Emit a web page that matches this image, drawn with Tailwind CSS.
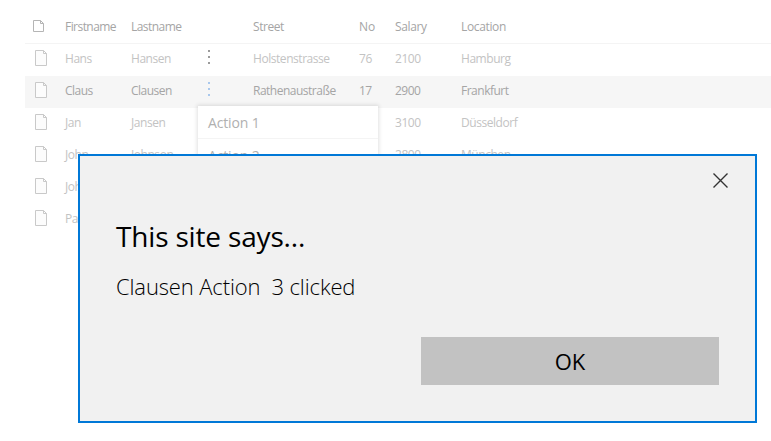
<!DOCTYPE html>
<html lang="en">
<head>
<meta charset="utf-8">
<title>Employees</title>
<script src="https://cdn.jsdelivr.net/npm/@tailwindcss/browser@4"></script>
</head>
<body class="relative h-[441px] w-[771px] overflow-hidden bg-white font-['Open_Sans','Noto_Sans',sans-serif]">
<svg class="hidden">
  <symbol id="file" viewBox="0 0 12 16"><path d="M.5 .5H8.5L11.5 3.5V15.5H.5ZM8.5 .5V3.5H11.5" fill="#fcfcfc" stroke="#c9c9c9"/></symbol>
  <symbol id="dots" viewBox="0 0 2 14"><path d="M0 0h2v2H0zM0 6h2v2H0zM0 12h2v2H0z" fill="currentColor"/></symbol>
</svg>
<main class="ml-[25px] pt-[11px] text-[12px] leading-[30px] text-[#c3c3c3]">
  <div class="grid h-[33px] grid-cols-[40px_66px_77px_45px_106px_36px_66px_1fr] border-b border-[#f4f4f4] leading-8 text-[#a5a5a5]"><span class="pt-[9px] pl-2"><svg class="h-[12px] w-[11px]" viewBox="0 0 11 12" fill="none"><path d="M.5 .5H7.5L10.5 3.5V11.5H.5ZM7.5 .5V3.5H10.5" stroke="#b5b5b5"/></svg></span><span class="tracking-[-.55px]">Firstname</span><span class="tracking-[-.55px]">Lastname</span><span></span><span class="tracking-[-.45px]">Street</span><span>No</span><span class="tracking-[-.36px]">Salary</span><span class="tracking-[-.36px]">Location</span></div>
  <div class="grid h-8 grid-cols-[40px_66px_77px_45px_106px_36px_66px_1fr] tracking-[-.45px]"><span class="pt-[6px] pl-[10px]"><svg class="h-4 w-3"><use href="#file"/></svg></span><span>Hans</span><span>Hansen</span><span class="pt-[6px] text-[#9b9b9b]"><svg class="h-[14px] w-[2px]"><use href="#dots"/></svg></span><span>Holstenstrasse</span><span>76</span><span>2100</span><span>Hamburg</span></div>
  <div class="grid h-8 grid-cols-[40px_66px_77px_45px_106px_36px_66px_1fr] bg-[#f6f6f6] tracking-[-.5px] text-[#a5a5a5]"><span class="pt-[6px] pl-[10px]"><svg class="h-4 w-3"><use href="#file"/></svg></span><span>Claus</span><span>Clausen</span><span class="pt-[6px] text-[#a9c8ed]"><svg class="h-[14px] w-[2px]"><use href="#dots"/></svg></span><span>Rathenaustraße</span><span>17</span><span>2900</span><span>Frankfurt</span></div>
  <div class="grid h-8 grid-cols-[40px_66px_77px_45px_106px_36px_66px_1fr] tracking-[-.45px]"><span class="pt-[6px] pl-[10px]"><svg class="h-4 w-3"><use href="#file"/></svg></span><span>Jan</span><span>Jansen</span><span></span><span></span><span></span><span>3100</span><span>Düsseldorf</span></div>
  <div class="grid h-8 grid-cols-[40px_66px_77px_45px_106px_36px_66px_1fr] tracking-[-.45px]"><span class="pt-[6px] pl-[10px]"><svg class="h-4 w-3"><use href="#file"/></svg></span><span>John</span><span>Johnson</span><span></span><span></span><span></span><span>2800</span><span>München</span></div>
  <div class="grid h-8 grid-cols-[40px_66px] tracking-[-.45px]"><span class="pt-[6px] pl-[10px]"><svg class="h-4 w-3"><use href="#file"/></svg></span><span>John</span></div>
  <div class="grid h-8 grid-cols-[40px_66px] tracking-[-.45px]"><span class="pt-[6px] pl-[10px]"><svg class="h-4 w-3"><use href="#file"/></svg></span><span>Paul</span></div>
</main>
<div class="absolute top-[106px] left-[198px] w-[180px] bg-white text-[14px] tracking-[-.15px] text-[#b0b0b0] shadow-[0_0_4px_1px_rgba(0,0,0,0.12)]">
  <div class="h-[33px] border-b border-[#f4f4f4] pl-[10px] leading-[34px]">Action 1</div>
  <div class="h-8 pl-[10px] leading-[34px]">Action 2</div>
</div>
<section class="absolute top-[154px] left-[78px] h-[269px] w-[679px] border-2 border-[#0078d7] bg-[#f1f1f1] pr-9 pl-9 text-black">
  <div class="flex h-[61px] justify-end pt-[17px]"><svg class="-mr-[9px] h-[15px] w-[15px]" viewBox="0 0 15 15"><path d="M.5 .5 14.5 14.5M14.5 .5 .5 14.5" stroke="#333" stroke-width="1.4"/></svg></div>
  <h1 class="h-[40px] text-[28px] leading-[38px] tracking-[-.17px]">This site says...</h1>
  <p class="mt-[13px] h-[32px] text-[22px] leading-8 font-light tracking-[-.13px] whitespace-pre">Clausen Action  3 clicked</p>
  <button class="mt-[35px] ml-auto block h-12 w-[298px] bg-[#c2c2c2] text-[22px] leading-[48px]">OK</button>
</section>
</body>
</html>
